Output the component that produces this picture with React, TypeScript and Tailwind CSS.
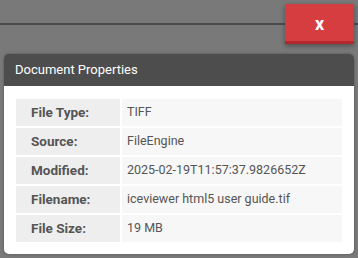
import React from "react";

const rows: { label: string; value: string }[] = [
  { label: "File Type:", value: "TIFF" },
  { label: "Source:", value: "FileEngine" },
  { label: "Modified:", value: "2025-02-19T11:57:37.9826652Z" },
  { label: "Filename:", value: "iceviewer html5 user guide.tif" },
  { label: "File Size:", value: "19 MB" },
];

export default function App() {
  return (
    <div
      className="relative w-[358px] h-[258px] overflow-hidden bg-[#797979]"
      style={{ fontFamily: 'Roboto, "Open Sans", sans-serif' }}
    >
      {/* toolbar line */}
      <div className="h-[23px]" />
      <div className="h-[2px] bg-[#4b4b4b]" />

      {/* close button */}
      <button className="absolute left-[285px] top-[4px] w-[69px] h-[40px] bg-[#d63d40] border-b-[3px] border-[#b02a2d] shadow-[0_2px_5px_rgba(0,0,0,0.35)] flex items-center justify-center pt-[2px] text-white font-bold text-[18px] leading-none">
        x
      </button>

      {/* properties panel */}
      <div className="mt-[29px] mx-[4px] rounded-[5px] overflow-hidden shadow-[0_0_3px_rgba(0,0,0,0.35)]">
        <div className="h-[32px] bg-[#4d4d4d] flex items-center px-[11px] text-white text-[13px]">
          Document Properties
        </div>
        <div className="bg-white px-[12px] pt-[13px] pb-[12px]">
          <div className="grid grid-cols-[104px_1fr] gap-[2px]">
            {rows.map((r) => (
              <React.Fragment key={r.label}>
                <div className="h-[27px] bg-[#eeeeee] flex items-center pl-[15px] text-[13.5px] font-bold text-[#555555]">
                  {r.label}
                </div>
                <div className="h-[27px] bg-[#f7f7f7] flex items-center pl-[5px] text-[12.5px] text-[#555555]">
                  {r.value}
                </div>
              </React.Fragment>
            ))}
          </div>
        </div>
      </div>
    </div>
  );
}
